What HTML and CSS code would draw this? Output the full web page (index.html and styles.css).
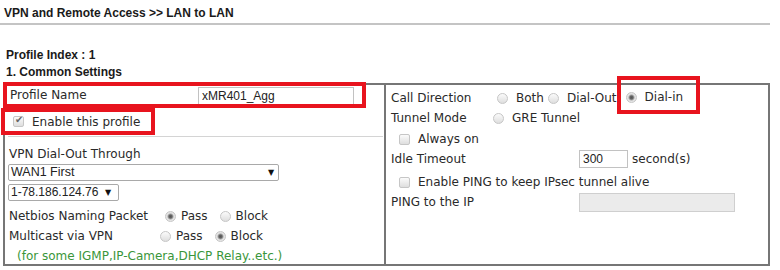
FILE: index.html
```html
<!DOCTYPE html>
<html lang="en">
<head>
  <meta charset="UTF-8" />
  <title>LAN to LAN</title>
  <link rel="stylesheet" href="styles.css">
</head>
<body>
  <div class="title">VPN and Remote Access &gt;&gt; LAN to LAN</div>
  <div class="rule"></div>

  <div class="index">Profile Index : 1</div>
  <div class="section">1. Common Settings</div>

  <div class="settings">
    <div class="col left">
      <div class="row name-row mark">
        <span class="lbl name-lbl">Profile Name</span>
        <input type="text" class="txt name-txt" value="xMR401_Agg" />
      </div>
      <div class="row enable-row mark">
        <label><input type="checkbox" class="chk" checked /> Enable this profile</label>
      </div>
      <div class="sep"></div>

      <div class="row via-row">VPN Dial-Out Through</div>
      <div class="sel wan">
        <select><option>WAN1 First</option></select>
      </div>
      <div class="sel ip">
        <select><option>1-78.186.124.76</option></select>
      </div>

      <div class="row nb-row">
        <span class="lbl netbios-lbl">Netbios Naming Packet</span>
        <label><input type="radio" name="nb" class="rad" checked /> Pass</label>
        <label class="opt"><input type="radio" name="nb" class="rad" /> Block</label>
      </div>
      <div class="row">
        <span class="lbl multicast-lbl">Multicast via VPN</span>
        <label><input type="radio" name="mc" class="rad" /> Pass</label>
        <label class="opt"><input type="radio" name="mc" class="rad" checked /> Block</label>
      </div>
      <div class="row note">(for some IGMP,IP-Camera,DHCP Relay..etc.)</div>
    </div>

    <div class="col right">
      <div class="row">
        <span class="lbl call-lbl">Call Direction</span>
        <label><input type="radio" name="cd" class="rad" /> Both</label>
        <label class="opt-s"><input type="radio" name="cd" class="rad" /> Dial-Out</label>
        <label class="dialin mark"><input type="radio" name="cd" class="rad" checked /> Dial-in</label>
      </div>
      <div class="row">
        <span class="lbl tunnel-lbl">Tunnel Mode</span>
        <label><input type="radio" name="tm" class="rad" /> GRE Tunnel</label>
      </div>
      <div class="row indent">
        <label><input type="checkbox" class="chk" /> Always on</label>
      </div>
      <div class="row">
        <span class="lbl wide-lbl">Idle Timeout</span>
        <input type="text" class="txt idle-txt" value="300" />
        <span class="unit">second(s)</span>
      </div>
      <div class="row indent ping-row">
        <label><input type="checkbox" class="chk" /> Enable PING to keep IPsec tunnel alive</label>
      </div>
      <div class="row">
        <span class="lbl wide-lbl">PING to the IP</span>
        <input type="text" class="txt ping-txt" disabled />
      </div>
    </div>
  </div>
</body>
</html>
```

FILE: styles.css
```css
* { box-sizing: border-box; }
body { margin: 0; background: #fff; color: #2a2a2a; font-family: "DejaVu Sans", Verdana, sans-serif; font-size: 12px; }

.title {
  font-family: "Liberation Sans", Arial, sans-serif; font-weight: bold;
  font-size: 12px; color: #1a1a1a; padding: 6px 4px 0; height: 23px;
}
.rule { height: 2px; background: #c4c4c4; width: 770px; }
.index, .section {
  font-family: "Liberation Sans", Arial, sans-serif; font-weight: bold;
  font-size: 12px; color: #1a1a1a; padding-left: 6px;
}
.index { margin-top: 23px; height: 17px; line-height: 14px; }
.section { height: 18px; line-height: 14px; }

.settings {
  margin-left: 3px; width: 767px; height: 183px;
  border: 2px solid #767676;
  display: grid; grid-template-columns: 381px 1fr;
}
.col { display: flex; flex-direction: column; }
.left { border-right: 2px solid #767676; padding-left: 4px; }
.right { padding-left: 5px; padding-top: 3px; }

.row { display: flex; align-items: center; height: 20px; white-space: nowrap; }
.row label { display: flex; align-items: center; }
.mark { outline: 4px solid #e8141e; }

.name-row { margin-top: 1px; height: 18px; width: 355px; margin-left: -2px; }
.name-lbl { width: 191px; padding-left: 3px; }
.enable-row { margin-top: 8px; height: 19px; width: 146px; margin-left: -4px; padding-left: 8px; }
.sep { margin-top: 5px; height: 1px; background: #d4d4d4; width: 375px; margin-left: -1px; }
.via-row { margin-top: 7px; }

.txt {
  font-family: "Liberation Sans", Arial, sans-serif; font-size: 12px;
  border: 1px solid #c2c2c2; height: 18px; padding: 0 3px; color: #222;
}
.name-txt { width: 156px; margin-top: 2px; }
.idle-txt { width: 49px; }
.ping-txt { width: 156px; height: 19px; background: #ebebeb; border-color: #cfcfcf; }
.unit { margin-left: 4px; }

.sel { position: relative; margin-left: -1px; }
.sel select {
  appearance: none; -webkit-appearance: none; background: #fff;
  border: 1px solid #a9a9a9; border-radius: 2px; height: 17px;
  font-family: "Liberation Sans", Arial, sans-serif; font-size: 12.5px; color: #222;
  padding: 0 2px; line-height: 15px; display: block;
}
.sel::after {
  content: "\25BC"; position: absolute; top: 4px; font-size: 8px; color: #111;
}
.wan select { width: 271px; }
.wan::after { left: 260px; }
.ip { margin-top: 3px; }
.ip select { width: 111px; font-size: 12px; }
.ip::after { left: 97px; }

.nb-row { margin-top: 5px; }
.netbios-lbl { width: 156px; }
.multicast-lbl { width: 151px; }
.left .rad { margin-right: 5px; }
.opt { margin-left: 12px; }
.note { color: #3a963a; padding-left: 8px; height: 19px; }

.rad, .chk {
  appearance: none; -webkit-appearance: none; margin: 0 8px 0 0;
  width: 11px; height: 11px; border: 1px solid #c6c6c6;
  background: linear-gradient(#fbfbfb, #dedede); position: relative;
}
.rad { border-radius: 50%; }
.rad:checked { background: radial-gradient(circle, #555 0, #666 1.6px, #aaa 2.6px, #e4e4e4 3.5px, #e4e4e4 100%); }
.chk { border-radius: 2px; }
.chk:checked::after {
  content: "\2714"; position: absolute; left: 1px; top: -3px;
  font-size: 10px; color: #666;
}

.call-lbl { width: 106px; }
.tunnel-lbl { width: 102px; }
.opt-s { margin-left: 4px; }
.row .dialin {
  align-self: flex-start; margin-top: -8px; margin-left: 4px;
  padding-left: 5px; padding-top: 4px; height: 30px; width: 75px;
}
.indent { padding-left: 8px; margin-top: 1px; }
.ping-row { margin-top: 3px; }
.wide-lbl { width: 188px; }
```
